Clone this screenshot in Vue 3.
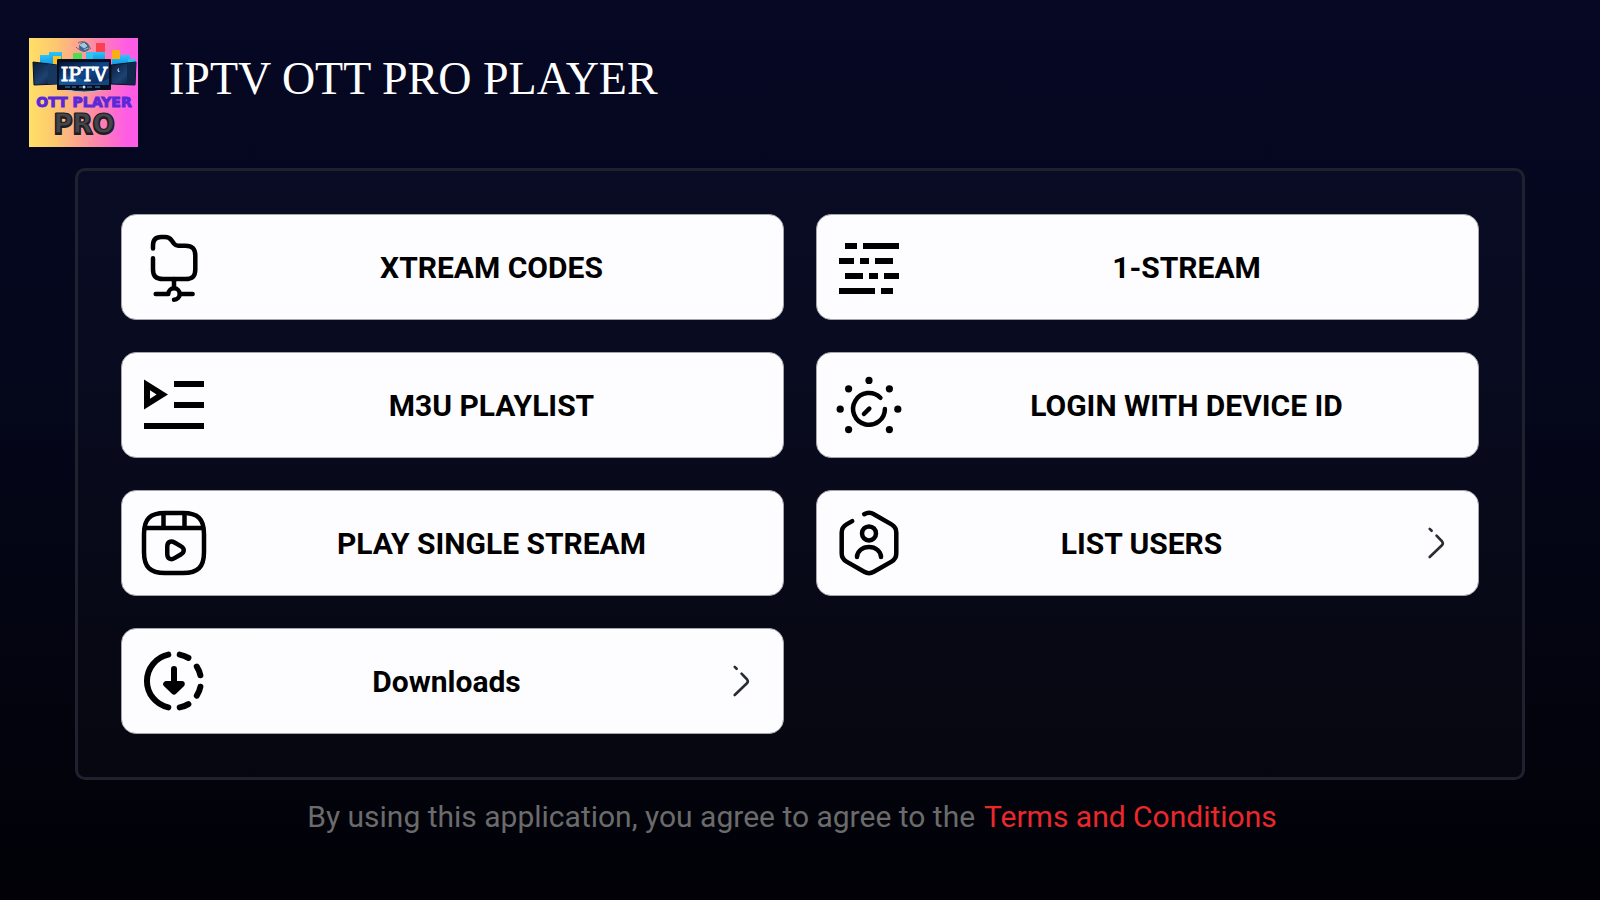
<script setup>
const options = [
  { label: 'XTREAM CODES', icon: 'server' },
  { label: '1-STREAM', icon: 'stream' },
  { label: 'M3U PLAYLIST', icon: 'playlist' },
  { label: 'LOGIN WITH DEVICE ID', icon: 'device' },
  { label: 'PLAY SINGLE STREAM', icon: 'reel' },
  { label: 'LIST USERS', icon: 'user', arrow: true },
  { label: 'Downloads', icon: 'download', arrow: true },
]
</script>

<template>
  <div class="screen">
    <header class="header">
      <svg class="logo" viewBox="0 0 109 109" role="img" aria-label="IPTV OTT Player Pro">
        <defs>
          <linearGradient id="logoBg" x1="0" y1="0" x2="1" y2="0">
            <stop offset="0" stop-color="#ffe066" />
            <stop offset="0.25" stop-color="#fdc670" />
            <stop offset="0.65" stop-color="#fd82b0" />
            <stop offset="0.9" stop-color="#ff5ce6" />
            <stop offset="1" stop-color="#ff5ce6" />
          </linearGradient>
          <linearGradient id="screenBg" x1="0" y1="0" x2="1" y2="1">
            <stop offset="0" stop-color="#07142f" />
            <stop offset="0.5" stop-color="#10458a" />
            <stop offset="1" stop-color="#0b2250" />
          </linearGradient>
          <linearGradient id="sideBg" x1="0" y1="0" x2="1" y2="1">
            <stop offset="0" stop-color="#0a1a38" />
            <stop offset="0.55" stop-color="#1d4272" />
            <stop offset="1" stop-color="#081226" />
          </linearGradient>
          <linearGradient id="tile" x1="0" y1="0" x2="0" y2="1">
            <stop offset="0" stop-color="#2bc4fa" />
            <stop offset="1" stop-color="#149be8" />
          </linearGradient>
        </defs>
        <rect width="109" height="109" fill="url(#logoBg)" />
        <rect x="11" y="17" width="9" height="9" fill="url(#tile)" />
        <rect x="20" y="14" width="13" height="12" fill="url(#tile)" />
        <rect x="24" y="18" width="8" height="8" fill="#ffc21c" />
        <rect x="44" y="15" width="9" height="7" fill="#4fdc50" />
        <rect x="57" y="14" width="8" height="7" fill="#35c3ec" />
        <rect x="64" y="14" width="12" height="8" fill="url(#tile)" />
        <rect x="67" y="5" width="9" height="9" fill="#fb4050" />
        <rect x="83" y="17" width="18" height="9" fill="url(#tile)" />
        <rect x="83" y="12" width="8" height="9" fill="#ffae12" />
        <rect x="99" y="21" width="8" height="6" fill="#20c6f4" />
        <circle cx="55" cy="9" r="5" fill="#356997" />
        <path d="M51 7l4-2 3 3-3 2zM55 12l4-2" fill="#a9c8d5" stroke="#a9c8d5" stroke-width="1" />
        <path d="M47 9c3 4 11 5 15 1M49 5c5-3 10-1 12 5" fill="none" stroke="#6a6180" stroke-width="1" />
        <path d="M4 24L28 27V46L5 47Z" fill="url(#sideBg)" stroke="#07101f" stroke-width="1" />
        <path d="M19 26L28 27V46L19 46Z" fill="#153760" />
        <path d="M107 24L82 27V46L106 47Z" fill="url(#sideBg)" stroke="#07101f" stroke-width="1" />
        <path d="M98 26L107 24L106 47L98 46Z" fill="#10284e" />
        <path d="M90 30a2 2 0 1 0 1 4a3 3 0 0 1-1-4" fill="#e7f4ff" />
        <path d="M38 52Q55 56 73 52L70 50H40Z" fill="#322c42" stroke="#b7c4d9" stroke-width="1" />
        <rect x="28" y="21" width="54" height="31" rx="1" fill="#070d1c" />
        <rect x="30" y="24" width="50" height="23" fill="url(#screenBg)" />
        <path d="M30 42Q42 34 54 42T80 40V47H30Z" fill="#1766b0" opacity="0.5" />
        <path d="M36 49h5M43 49h4M50 49h3M58 49h5M66 49h5" stroke="#5187c5" stroke-width="1" />
        <circle cx="55" cy="49" r="1.5" fill="#c5f0ff" />
        <text class="logo-iptv" x="55" y="43">IPTV</text>
        <text class="logo-ott" x="55" y="69">OTT PLAYER</text>
        <text class="logo-pro logo-pro-back" x="55" y="96">PRO</text>
        <text class="logo-pro" x="55" y="95">PRO</text>
      </svg>
      <h1 class="title">IPTV OTT PRO PLAYER</h1>
    </header>

    <main class="panel">
      <button v-for="item in options" :key="item.label" type="button" class="card">
        <svg class="icon" viewBox="0 0 24 24" aria-hidden="true">
          <g v-if="item.icon === 'server'" class="line">
            <path d="M5 5.8V4.8C5 2.9 5.9 2 7.7 2H9C10.2 2 10.6 2.3 11.2 3.1L12 4.2C12.4 4.7 12.7 4.9 13.4 4.9H15.8C18.2 4.9 19.1 5.9 19.1 8.2V12.8C19.1 15.1 18.1 16 15.8 16H8.3C6 16 5 15 5 12.8V9.1" />
            <path d="M12 16V19M5.9 21H10.1M14 21H18.2M10.1 21A1.9 1.9 0 1 1 12 22.9" />
          </g>
          <path
            v-else-if="item.icon === 'stream'"
            d="M4 4h4v2H4zM10 4h12v2H10zM2 9h5v2H2zM9 9h3v2H9zM14 9h6v2h-6zM4 14h6v2H4zM12 14h3v2h-3zM17 14h5v2h-5zM2 19h12v2H2zM16 19h4v2h-4z"
          />
          <path
            v-else-if="item.icon === 'playlist'"
            fill-rule="evenodd"
            d="M12 4h10v2H12zM12 11h10v2H12zM2 18h20v2H2zM2 3.5L10 8.5L2 13.5zM4 7.1V9.9L6.2 8.5z"
          />
          <g v-else-if="item.icon === 'device'">
            <path class="line" d="M15.8 9.6A5.3 5.3 0 1 0 17.3 13.3M12.1 13.2L10.3 15" />
            <circle cx="12" cy="3.8" r="1.2" />
            <circle cx="5.2" cy="6.6" r="1.2" />
            <circle cx="18.8" cy="6.6" r="1.2" />
            <circle cx="2.4" cy="13.4" r="1.2" />
            <circle cx="21.6" cy="13.4" r="1.2" />
            <circle cx="5.2" cy="20.2" r="1.2" />
            <circle cx="18.8" cy="20.2" r="1.2" />
          </g>
          <g v-else-if="item.icon === 'reel'" class="line">
            <path d="M22 15V9C22 4 20 2 15 2H9C4 2 2 4 2 9V15C2 20 4 22 9 22H15C20 22 22 20 22 15Z" />
            <path d="M2.5 7H21.5M8.5 2.1V7M15.5 2.1V7" />
            <path d="M9.75 14.45V13.25C9.75 11.71 10.84 11.08 12.17 11.85L14.25 13.05C15.58 13.82 15.58 15.08 14.25 15.85L12.17 17.05C10.84 17.82 9.75 17.19 9.75 15.65Z" />
          </g>
          <g v-else-if="item.icon === 'user'" class="line">
            <path d="M10.4 2.4C11.4 1.8 12.7 1.8 13.6 2.4L19.5 5.8C20.5 6.4 21.1 7.4 21.1 8.5V15.5C21.1 16.6 20.5 17.6 19.5 18.2L13.6 21.6C12.6 22.2 11.4 22.2 10.4 21.6L4.5 18.2C3.5 17.6 2.9 16.6 2.9 15.5V8.5C2.9 7.4 3.5 6.4 4.5 5.8L6.4 4.7" />
            <circle cx="12" cy="8.8" r="2.33" />
            <path d="M8 16.7C8 14.8 9.8 13.3 12 13.3S16 14.8 16 16.7" />
          </g>
          <g v-else class="line thick">
            <path d="M10.1 3.2A9 9 0 0 0 10.1 20.8" />
            <path d="M13.9 3.2Q15.5 3.5 16.8 4.3M19.6 7.2Q20.5 8.6 20.8 10.1M20.8 13.9Q20.5 15.5 19.6 16.9M16.8 19.7Q15.5 20.5 13.9 20.8" />
            <path d="M12 8V13" />
            <path class="solid" d="M9.4 13H14.6L12 15.5Z" />
          </g>
        </svg>
        <span class="label">{{ item.label }}</span>
        <svg v-if="item.arrow" class="chevron" viewBox="0 0 24 24" aria-hidden="true">
          <path d="M8.4 20L15.4 13.3Q16.4 12.2 15.4 11L12.3 7.8M9.5 5L8.4 3.9" />
        </svg>
      </button>
    </main>

    <footer class="footer">
      <span>By using this application, you agree to agree to the</span>
      <a class="terms" href="#terms">Terms and Conditions</a>
    </footer>
  </div>
</template>

<style>
body {
  margin: 0;
  background: #000005;
}
</style>

<style scoped>
.screen {
  box-sizing: border-box;
  min-height: 100vh;
  padding: 38px 75px 0;
  background: linear-gradient(180deg, #060824 0%, #05071c 40%, #03040f 75%, #010107 100%);
  font-family: Roboto, "Liberation Sans", sans-serif;
}

.header {
  display: flex;
  align-items: flex-start;
  gap: 31px;
  margin-left: -46px;
}

.logo {
  flex: none;
  width: 109px;
  height: 109px;
}

.logo text {
  text-anchor: middle;
  font-weight: 700;
}

.logo-iptv {
  font-family: "DejaVu Serif", serif;
  font-size: 19px;
  fill: #fff;
}

.logo .logo-iptv {
  font-weight: 400;
  stroke: #fff;
  stroke-width: 1px;
}

.logo-ott {
  font-family: "DejaVu Sans", sans-serif;
  font-size: 14px;
  fill: #5a28d8;
  stroke: #5a28d8;
  stroke-width: 1px;
}

.logo-pro {
  font-family: "DejaVu Sans", sans-serif;
  font-size: 26px;
  fill: #45454b;
  stroke: #1d1d24;
  stroke-width: 1px;
}

.logo-pro-back {
  fill: #1d1d24;
  stroke-width: 2px;
}

.title {
  margin: 14px 0 0;
  color: #fff;
  font-family: "Liberation Serif", serif;
  font-size: 46px;
  font-weight: 400;
  line-height: 54px;
}

.panel {
  display: grid;
  grid-template-columns: 1fr 1fr;
  gap: 32px;
  margin-top: 21px;
  padding: 43px;
  border: 3px solid #20212f;
  border-radius: 10px;
  background: rgba(255, 255, 255, 0.02);
}

.card {
  display: flex;
  align-items: center;
  box-sizing: border-box;
  height: 106px;
  padding: 0 0 0 16px;
  border: 1px solid #a5a5ad;
  border-radius: 15px;
  background: #fdfdff;
  color: #000;
  font-family: inherit;
  cursor: pointer;
}

.icon {
  flex: none;
  width: 72px;
  height: 72px;
  margin-right: -10px;
}

.line {
  fill: none;
  stroke: #000;
  stroke-width: 1.5;
  stroke-linecap: round;
  stroke-linejoin: round;
}

.thick {
  stroke-width: 2;
}

.solid {
  fill: #000;
}

.label {
  flex: 1;
  padding-top: 2px;
  font-size: 30px;
  font-weight: 700;
  line-height: 36px;
  text-align: center;
}

.chevron {
  flex: none;
  width: 42px;
  height: 42px;
  margin: 0 21px 0 27px;
  fill: none;
  stroke: #292d32;
  stroke-width: 1.5;
  stroke-linecap: round;
  stroke-linejoin: round;
}

.footer {
  display: flex;
  justify-content: center;
  gap: 9px;
  margin: 19px 16px 0 0;
  color: #6b6b6b;
  font-size: 30px;
  line-height: 36px;
}

.terms {
  color: #ea282c;
  text-decoration: none;
}
</style>
